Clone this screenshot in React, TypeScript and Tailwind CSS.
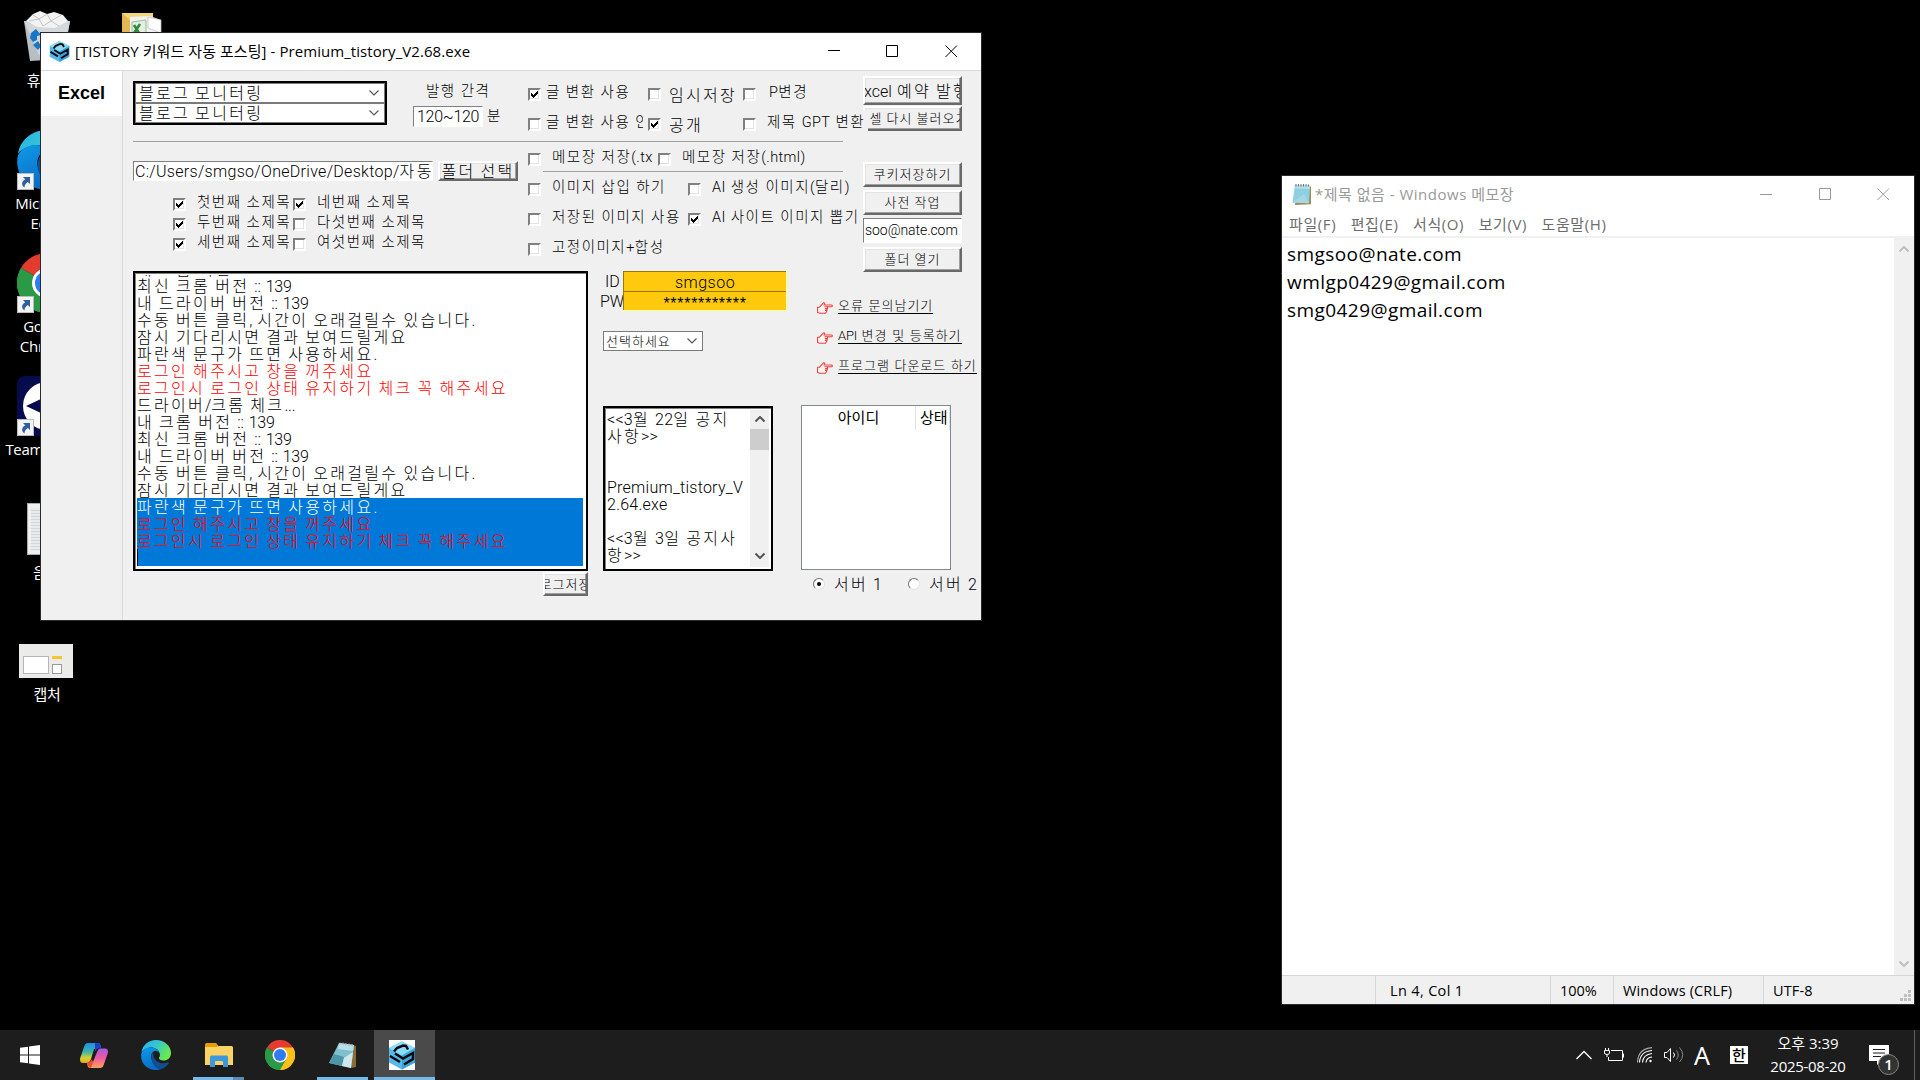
import React from "react";

const GULIM = "font-light font-['Liberation_Sans','Noto_Sans_CJK_KR',sans-serif]";
const MALGUN = "font-['Open_Sans','Noto_Sans_CJK_KR',sans-serif]";

type TProps = { children: string; className?: string; latin?: string };

/* Korean runs keep the wide bitmap-font pitch, Latin runs get their own tracking. */
function T({ children, className = "", latin = "tracking-[-0.2px]" }: TProps) {
  const parts = children.split(/([A-Za-z0-9.:/_~,@()*<>+]+)/);
  return (
    <span className={`whitespace-pre ${className}`}>
      {parts.map((p, i) => (i % 2 ? <span key={i} className={`font-['Roboto','Liberation_Sans',sans-serif] ${latin}`}>{p}</span> : p))}
    </span>
  );
}

const K17 = "text-[16px] leading-[17px] tracking-[2.3px] [word-spacing:-1.7px]";
const K15 = "text-[14.5px] leading-[17px] tracking-[1.5px] [word-spacing:-0.5px]";
const K13 = "text-[13px] leading-[15px] tracking-[1px] [word-spacing:-0.5px]";

function Box({ on = false }: { on?: boolean }) {
  return (
    <span className="flex size-[13px] shrink-0 items-center justify-center border-2 border-t-[#808080] border-l-[#808080] border-r-white border-b-white bg-white shadow-[inset_-1px_-1px_0_#e3e3e3]">
      {on && (
        <svg width="9" height="9" viewBox="0 0 9 9" shapeRendering="crispEdges">
          <path d="M1 3h1v1h1v1h1v-1h1v-1h1v-1h1v-1h1v3h-1v1h-1v1h-1v1h-1v1h-1v-1h-1v-1h-1z" fill="#000" />
        </svg>
      )}
    </span>
  );
}

type CheckProps = { on?: boolean; label: string; className?: string; text?: string; textClass?: string };
function Check({ on, label, className = "", text = K15, textClass = "ml-[11px] -mt-[4px]" }: CheckProps) {
  return (
    <label className={`flex h-[13px] shrink-0 items-start ${className}`}>
      <Box on={on} />
      <T className={`${text} ${textClass}`} latin="tracking-[0.400px]">{label}</T>
    </label>
  );
}

function Button({ children, className = "" }: { children: React.ReactNode; className?: string }) {
  return (
    <button className={`flex shrink-0 items-center justify-center overflow-hidden border-2 border-t-white border-l-white border-r-[#696969] border-b-[#696969] bg-[#f0f0f0] shadow-[inset_-1px_-1px_0_#a0a0a0,inset_1px_1px_0_#e3e3e3] ${className}`}>
      {children}
    </button>
  );
}

function Chevron({ className = "", up = false, w = 10, color = "#555", sw = 1.2 }: { className?: string; up?: boolean; w?: number; color?: string; sw?: number }) {
  return (
    <svg className={className} width={w} height={w * 0.6} viewBox="0 0 10 6" fill="none" stroke={color} strokeWidth={sw}>
      <path d={up ? "M0.5 5.5L5 1L9.5 5.5" : "M0.5 0.5L5 5L9.5 0.5"} />
    </svg>
  );
}

function CubeIcon({ size }: { size: number }) {
  return (
    <svg width={size} height={size} viewBox="0 0 26 28">
      <path d="M13 0L26 6.5V21L13 28L0 21V6.5Z" fill="#55b9ea" />
      <path d="M13 0L26 6.5L13 14L0 6.5Z" fill="#8adcf8" />
      <path d="M13 14L26 6.5V21L13 28Z" fill="#3aa4dd" />
      <path d="M5 10L8 6.5L14 4L17 4.5L19 8M1 14.500L11 20.500M6 12L14 17L24 11.500V17.500L15 23" fill="none" stroke="#0a0a0a" strokeWidth="2.500" />
    </svg>
  );
}

function EdgeIcon({ size }: { size: number }) {
  return (
    <svg width={size} height={size} viewBox="0 0 30 30">
      <defs>
        <linearGradient id="eg1" x1="0" y1="0" x2="1" y2="0.5">
          <stop offset="0" stopColor="#2bb0f0" />
          <stop offset="0.5" stopColor="#33c6d0" />
          <stop offset="1" stopColor="#6be84e" />
        </linearGradient>
        <linearGradient id="eg2" x1="0" y1="0" x2="0.4" y2="1">
          <stop offset="0" stopColor="#0f9be8" />
          <stop offset="1" stopColor="#0a6cc8" />
        </linearGradient>
      </defs>
      <path d="M0.5 12C1.5 5 7.5 0 15 0C23.500 0 30 6 30 13C30 18 26.500 20.500 22.500 20.500C19 20.500 17.500 19 18 17.500C19 16.500 19.200 15 18.600 13C17.500 9 12 6.500 7 8C4 9 1.500 10 0.500 12Z" fill="url(#eg1)" />
      <path d="M0.200 14C1 9.500 5.500 7.500 9.500 7.500C15 7.500 18.800 11 18.800 15C18.800 13 17 11 14.500 11C11 11 9.500 15 10.500 19C12 25 17 28.500 19 29.400C10 32 -1 26 0.200 14Z" fill="url(#eg2)" />
      <path d="M12.500 12C8 16 11 27 19 29.400C23 28.500 26 26 27.800 23C28 22.500 27.500 22 27 22.300C20 25.500 11 21 12.500 12Z" fill="#124d94" />
    </svg>
  );
}

function ChromeIcon({ size }: { size: number }) {
  return (
    <svg width={size} height={size} viewBox="0 0 48 48">
      <path d="M24 24L3.200 12A24 24 0 0 1 44.800 12Z" fill="#e33b2e" />
      <path d="M24 24L44.800 12A24 24 0 0 1 24 48Z" fill="#fbc116" />
      <path d="M24 24L24 48A24 24 0 0 1 3.200 12Z" fill="#2b9a47" />
      <path d="M24 12H44.800A24 24 0 0 1 24 48L34.400 30Z" fill="#fbc116" />
      <path d="M34.400 30L24 48A24 24 0 0 1 3.200 12L13.600 30Z" fill="#2b9a47" />
      <circle cx="24" cy="24" r="12" fill="#fff" />
      <circle cx="24" cy="24" r="9.600" fill="#2f7bf0" />
    </svg>
  );
}

function Shortcut() {
  return (
    <svg className="absolute bottom-0 left-0" width="17" height="17" viewBox="0 0 17 17">
      <rect x="0.500" y="0.500" width="16" height="16" fill="#f4f4f4" stroke="#bbb" />
      <path d="M6 4H13V11L10.800 9C8.500 10.500 7.500 12 7.500 14.500C4 12 4.500 8.500 8.200 6.300Z" fill="#2d5f9f" />
    </svg>
  );
}

function NotepadIcon({ w, h }: { w: number; h: number }) {
  return (
    <svg width={w} height={h} viewBox="0 0 20 25" preserveAspectRatio="none">
      <path d="M4 2L19 3V24L3 25Z" fill="#a08a58" />
      <path d="M3 1L18 2L17 23L0.500 22Z" fill="#8fd0e0" />
      <path d="M3 1L18 2L17.800 6L2.500 5Z" fill="#b5e0ea" />
      <path d="M0.500 22L12 12L17 23Z" fill="#a5d8e4" />
      <path d="M4 0V3M6.500 0V3M9 0V3M11.500 0V3M14 0V3M16.500 0.500V3" stroke="#666" strokeWidth="1" />
    </svg>
  );
}

function DeskLabel({ children, className = "" }: { children: string; className?: string }) {
  return <span className={`${MALGUN} whitespace-pre text-center text-[15px] leading-[20px] tracking-[-0.3px] text-white ${className}`}>{children}</span>;
}

function Desktop() {
  return (
    <>
      <div className="absolute top-[9px] left-0 flex w-[94px] flex-col items-center">
        <svg width="48" height="52" viewBox="0 0 48 52">
          <path d="M1 12L47 12L40 50L7 52Z" fill="#b9bec3" />
          <path d="M1 12L15 18L47 12L40 50L16 46Z" fill="#d4d8da" />
          <path d="M3 12L10 5L17 2L24 5L31 3L40 6L45 12L32 19L14 18Z" fill="#f3f3f3" />
          <path d="M10 6L16 10L24 5L28 12L38 6M6 12L16 10L20 17L28 12L36 17" stroke="#c5c5c5" fill="none" />
          <path d="M8 24L13 20L18 26L14 27V31L10 33L7 29ZM10 36L15 32L18 37L15 41Z" fill="#1877c9" />
        </svg>
        <DeskLabel className="mt-[9px]">휴지통</DeskLabel>
      </div>
      <div className="absolute top-[13px] left-[122px]">
        <svg width="40" height="40" viewBox="0 0 40 40">
          <path d="M0 0H31V40H0Z" fill="#f6d67a" />
          <path d="M0 0L10 9V40H0Z" fill="#e0b650" />
          <path d="M8 4L28 3L39 7V40H8Z" fill="#f2f2f2" />
          <path d="M26 4L39 7V20L26 15Z" fill="#fff" stroke="#bbb" strokeWidth="0.700" />
          <path d="M10 9L24 7V30L10 28Z" fill="#e3efe0" stroke="#9db99a" />
          <path d="M12 12L17 20M18 11L12 20" stroke="#2d8a3e" strokeWidth="2.500" />
        </svg>
      </div>
      <div className="absolute top-[130px] left-0 flex w-[94px] flex-col items-center">
        <div className="relative h-[60px] w-[60px]"><EdgeIcon size={60} /><Shortcut /></div>
        <DeskLabel className="mt-[3px]">{"Microsoft\nEdge"}</DeskLabel>
      </div>
      <div className="absolute top-[253px] left-0 flex w-[94px] flex-col items-center">
        <div className="relative h-[60px] w-[60px]"><ChromeIcon size={60} /><Shortcut /></div>
        <DeskLabel className="mt-[3px]">{"Google\nChrome"}</DeskLabel>
      </div>
      <div className="absolute top-[376px] left-0 flex w-[94px] flex-col items-center">
        <div className="relative h-[60px] w-[60px]">
          <svg width="60" height="60" viewBox="0 0 60 60">
            <rect width="60" height="60" rx="8" fill="#060b4e" />
            <circle cx="30" cy="30" r="24" fill="#fff" />
            <path d="M9 30L26 22V27H34V22L51 30L34 38V33H26V38Z" fill="#060b4e" />
          </svg>
          <Shortcut />
        </div>
        <DeskLabel className="mt-[3px]">TeamViewer</DeskLabel>
      </div>
      <div className="absolute top-[503px] left-[27px] h-[52px] w-[40px] border border-[#aaa] bg-[#eef0f1] pt-[4px] pl-[3px]">
        <div className="h-[43px] bg-[repeating-linear-gradient(#e8ebec_0_2px,#d3d6d8_2px_3px)]" />
      </div>
      <DeskLabel className="absolute top-[562px] left-[33px]">음성</DeskLabel>
      <div className="absolute top-[644px] left-0 flex w-[92px] flex-col items-center">
        <div className="flex h-[34px] w-[54px] gap-[3px] bg-[#ebebe9] px-[4px] pt-[12px]">
          <div className="h-[18px] w-[26px] border border-[#b5b5b5] bg-white" />
          <div className="flex flex-col">
            <div className="h-[3px] w-[10px] bg-[#f7c52c]" />
            <div className="mt-[5px] h-[10px] w-[10px] border border-[#999] bg-white" />
          </div>
        </div>
        <DeskLabel className="mt-[6px] pl-[2px]">캡처</DeskLabel>
      </div>
    </>
  );
}

const LOG: [string, string, boolean][] = [
  ["내 크롬 버전 :: 139", "k", false],
  ["최신 크롬 버전 :: 139", "k", false],
  ["내 드라이버 버전 :: 139", "k", false],
  ["수동 버튼 클릭, 시간이 오래걸릴수 있습니다.", "k", false],
  ["잠시 기다리시면 결과 보여드릴게요", "k", false],
  ["파란색 문구가 뜨면 사용하세요.", "k", false],
  ["로그인 해주시고 창을 꺼주세요", "r", false],
  ["로그인시 로그인 상태 유지하기 체크 꼭 해주세요", "r", false],
  ["드라이버/크롬 체크...", "k", false],
  ["내 크롬 버전 :: 139", "k", false],
  ["최신 크롬 버전 :: 139", "k", false],
  ["내 드라이버 버전 :: 139", "k", false],
  ["수동 버튼 클릭, 시간이 오래걸릴수 있습니다.", "k", false],
  ["잠시 기다리시면 결과 보여드릴게요", "k", false],
  ["파란색 문구가 뜨면 사용하세요.", "w", true],
  ["로그인 해주시고 창을 꺼주세요", "r", true],
  ["로그인시 로그인 상태 유지하기 체크 꼭 해주세요", "r", true],
  ["", "k", true],
];
const LOG_COLOR: Record<string, string> = { k: "text-black", r: "text-[#ff0000]", w: "text-white" };

function Combo() {
  return (
    <div className="flex h-[20px] items-center justify-between border border-[#7a7a7a] bg-white pr-[5px] pl-[3px]">
      <T className={K17}>블로그 모니터링</T>
      <Chevron />
    </div>
  );
}

function Hand() {
  return (
    <svg width="16" height="12" viewBox="0 0 16 12" fill="#fff6f5" stroke="#f0403c" strokeWidth="1.100" strokeLinejoin="round">
      <path d="M0.600 5.200H2.500L6.500 0.800C7.500 0.400 8 1.300 7.500 2.200L7 3H14.500C15.600 3 15.600 4.800 14.500 4.800H10.500V6.300L10 8L9.500 9.800L8.500 11.300H3L0.600 10.500Z" />
      <path d="M7.500 4.800H10.500M8 6.600H10.300M8 8.400H10" />
    </svg>
  );
}

const LINKS = ["오류 문의남기기", "API 변경 및 등록하기", "프로그램 다운로드 하기"];

function TopOptions() {
  return (
    <div className="flex w-[740px] shrink-0 flex-col">
      <div className="flex h-[70px]">
        <div className="mt-[10px] ml-[10px] h-[44px] w-[254px] shrink-0 border-2 border-black bg-white">
          <Combo />
          <Combo />
        </div>
        <div className="ml-[26px] w-[115px] shrink-0 pt-[12px]">
          <T className={`ml-[13px] block ${K15}`}>발행 간격</T>
          <div className="mt-[6px] flex items-center">
            <div className="flex h-[21px] w-[70px] items-center border border-white border-t-[#808080] border-l-[#808080] bg-white pl-[3px]">
              <T className="text-[16px] leading-[18px]" latin="tracking-[-0.3px]">120~120</T>
            </div>
            <T className={`ml-[4px] ${K15}`}>분</T>
          </div>
        </div>
        <div className="flex w-[115px] shrink-0 flex-col gap-[17px] overflow-hidden pt-[17px]">
          <Check on label="글 변환 사용" textClass="ml-[5px] -mt-[4px]" />
          <Check label="글 변환 사용 안함" textClass="ml-[5px] -mt-[4px]" />
        </div>
        <div className="ml-[5px] flex w-[95px] shrink-0 flex-col gap-[17px] pt-[17px]">
          <Check label="임시저장" text={K17} textClass="ml-[8px] -mt-[1px]" />
          <Check on label="공개" text={K17} textClass="ml-[8px] -mt-[1px]" />
        </div>
        <div className="z-10 flex flex-col gap-[17px] pt-[17px]">
          <Check label="P변경" textClass="ml-[13px] -mt-[4px]" />
          <Check label="제목 GPT 변환" textClass="ml-[8px] -mt-[8px] h-[24px] w-[104px] bg-[#f0f0f0] pt-[4px] pl-[3px]" />
        </div>
      </div>
      <div className="ml-[10px] h-px w-[710px] bg-[#a0a0a0]" />
      <div className="flex">
        <div className="ml-[10px] w-[395px] pt-[19px]">
          <div className="flex gap-[5px]">
            <div className="flex h-[20px] w-[300px] items-center overflow-hidden border border-white border-t-[#808080] border-l-[#808080] bg-white pl-px">
              <T className={K17} latin="tracking-[0.3px]">C:/Users/smgso/OneDrive/Desktop/자동</T>
            </div>
            <Button className="h-[20px] w-[80px]"><T className={`mt-px ${K17}`}>폴더 선택</T></Button>
          </div>
          <div className="mt-[17px] ml-[40px] grid grid-cols-[120px_auto] gap-y-[7px]">
            <Check on label="첫번째 소제목" />
            <Check on label="네번째 소제목" />
            <Check on label="두번째 소제목" />
            <Check label="다섯번째 소제목" />
            <Check on label="세번째 소제목" />
            <Check label="여섯번째 소제목" />
          </div>
        </div>
        <div className="flex w-[335px] flex-col pt-[5px]">
          <div className="flex h-[24px]">
            <div className="flex w-[125px] items-start overflow-hidden pt-[6px]"><Check label="메모장 저장(.txt)" /></div>
            <Check label="메모장 저장(.html)" className="mt-[6px] ml-[5px]" />
          </div>
          <div className="ml-[15px] h-px w-[300px] bg-[#a0a0a0]" />
          <div className="mt-[11px] flex">
            <Check label="이미지 삽입 하기" className="w-[160px]" />
            <Check label="AI 생성 이미지(달리)" />
          </div>
          <div className="mt-[17px] flex">
            <Check label="저장된 이미지 사용" className="w-[160px]" />
            <Check on label="AI 사이트 이미지 뽑기" />
          </div>
          <Check label="고정이미지+합성" className="mt-[17px]" />
        </div>
      </div>
    </div>
  );
}

function Radio({ on = false, label }: { on?: boolean; label: string }) {
  return (
    <label className="flex w-[66px] shrink-0 items-center gap-[9px]">
      <span className="flex size-[12px] shrink-0 items-center justify-center rounded-full border border-[#e3e3e3] border-t-[#707070] border-l-[#707070] bg-white">
        {on && <span className="size-[4px] rounded-full bg-black" />}
      </span>
      <T className={`mt-px ${K17}`} latin="tracking-[0px]">{label}</T>
    </label>
  );
}

function MainWindow() {
  return (
    <div className="absolute top-[32px] left-[40px] flex h-[589px] w-[942px] flex-col border border-[#2a2a2a] bg-[#f0f0f0] text-black">
      <div className="flex h-[38px] shrink-0 items-center border-b border-[#d9d9d9] bg-white pl-[8px]">
        <CubeIcon size={21} />
        <span className={`ml-[5px] whitespace-pre text-[15px] tracking-[0.070px] ${MALGUN}`}>[TISTORY 키워드 자동 포스팅] - Premium_tistory_V2.68.exe</span>
        <svg className="mr-[2px] ml-auto" width="157" height="13" viewBox="0 0 157 13" fill="none" stroke="#000">
          <path d="M6 5.500H18M64.500 0.500H75.500V11.500H64.500ZM123.500 0.500L135 12M135 0.500L123.500 12" />
        </svg>
      </div>
      <div className={`flex min-h-0 flex-1 ${GULIM}`}>
        <div className="w-[82px] shrink-0 border-r border-[#d9d9d9]">
          <div className="flex h-[45px] items-center justify-center bg-white text-[18px] font-bold">Excel</div>
        </div>
        <div className="w-[858px]">
          <div className="flex h-[200px]">
            <TopOptions />
            <div className="flex w-[99px] flex-col pt-[5px]">
              <Button className="h-[29px]"><T className={`mt-px ${K17}`} latin="tracking-[0px]">Excel 예약 발행</T></Button>
              <Button className="mt-px h-[25px]"><T className={K13}>엑셀 다시 불러오기</T></Button>
              <Button className="mt-[31px] h-[25px]"><T className={K13}>쿠키저장하기</T></Button>
              <Button className="mt-[3px] h-[25px]"><T className={K13}>사전 작업</T></Button>
              <div className="mt-[3px] flex h-[25px] shrink-0 items-center border border-white border-t-[#808080] border-l-[#808080] bg-white pl-px">
                <T className="text-[14px]" latin="tracking-[-0.050px]">soo@nate.com</T>
              </div>
              <Button className="mt-[4px] h-[25px] shrink-0"><T className={K13}>폴더 열기</T></Button>
            </div>
          </div>
          <div className="flex pl-[10px]">
            <div className="flex w-[455px] flex-col items-end">
              <div className="h-[300px] w-[455px] overflow-hidden border-2 border-black bg-white p-[2px] shadow-[inset_1px_1px_0_#808080]">
                <div className="h-[292px] w-[446px] overflow-hidden">
                  <div className="-mt-[15px]">
                    {LOG.map(([text, color, sel], i) => (
                      <div key={i} className={`h-[17px] ${sel ? "bg-[#0078d7]" : ""} ${LOG_COLOR[color]} ${i === 17 ? "border-l border-black" : ""}`}>
                        <T className={`block pt-px ${K17}`}>{text}</T>
                      </div>
                    ))}
                  </div>
                </div>
              </div>
              <Button className="mt-px h-[24px] w-[45px]"><T className={K13}>로그저장</T></Button>
            </div>
            <div className="ml-[15px] w-[198px] shrink-0">
              <div className="flex h-[40px]">
                <div className="-ml-[3px] w-[23px] overflow-hidden pt-px font-['Roboto',sans-serif] text-[16px] leading-[20px] whitespace-pre">
                  <div className="pl-[5px]">ID</div>
                  <div>PW</div>
                </div>
                <div className="w-[164px] shrink-0 border-r border-b border-[#ffff9a] bg-[#ffc90e] text-center font-['Roboto',sans-serif]">
                  <div className="h-[20px] border-t border-l border-[#98780a] text-[16px] leading-[21px] tracking-[0.500px]">smgsoo</div>
                  <div className="h-[19px] border-t border-l border-[#98780a] font-['Liberation_Sans',sans-serif] text-[16px] leading-[24px] tracking-[0.700px]">************</div>
                </div>
              </div>
              <div className="mt-[20px] flex h-[20px] w-[100px] items-center justify-between border border-[#7a7a7a] bg-white pr-[5px] pl-[2px]">
                <T className={K13}>선택하세요</T>
                <Chevron />
              </div>
              <div className="mt-[55px] flex h-[165px] w-[170px] border-2 border-black bg-white shadow-[inset_1px_1px_0_#808080]">
                <div className="flex w-[145px] flex-col overflow-hidden pt-[3px] pl-[2px]">
                  {["<<3월 22일 공지", "사항>>", "", "", "Premium_tistory_V", "2.64.exe", "", "<<3월 3일 공지사", "항>>"].map((l, i) => (
                    <T key={i} className={`block h-[17px] shrink-0 ${K17}`} latin="tracking-[0.250px]">{l}</T>
                  ))}
                </div>
                <div className="my-[2px] flex w-[19px] flex-col items-center bg-[#f0f0f0]">
                  <Chevron up className="mt-[6px]" sw={2} />
                  <div className="mt-[7px] h-[21px] w-[19px] bg-[#cdcdcd]" />
                  <Chevron className="mt-auto mb-[8px]" sw={2} />
                </div>
              </div>
            </div>
            <div className="w-[178px] shrink-0 pt-[26px]">
              <div className="ml-[16px] flex flex-col gap-[13px]">
                {LINKS.map((l) => (
                  <a key={l} className="flex h-[17px] items-center gap-[5px]">
                    <span className="mt-[5px]"><Hand /></span>
                    <T className="border-b border-black text-[13px] leading-[15px] tracking-[1px]">{l}</T>
                  </a>
                ))}
              </div>
              <div className="mt-[31px] h-[165px] w-[150px] border border-[#828790] bg-white">
                <div className={`flex h-[24px] text-[15px] leading-[23px] font-normal ${MALGUN}`}>
                  <div className="w-[114px] border-r border-[#e5e5e5] text-center">아이디</div>
                  <div className="w-[34px] overflow-hidden border-r border-[#e5e5e5] pl-[4px] whitespace-pre">상태</div>
                </div>
              </div>
              <div className="mt-[5px] ml-[12px] flex gap-[29px]">
                <Radio on label="서버 1" />
                <Radio label="서버 2" />
              </div>
            </div>
          </div>
        </div>
      </div>
    </div>
  );
}

function Notepad() {
  return (
    <div className={`absolute top-[175px] left-[1281px] flex h-[830px] w-[634px] flex-col border border-[#2a2a2a] bg-white ${MALGUN}`}>
      <div className="flex h-[37px] shrink-0 items-center pl-[10px] text-[#999]">
        <NotepadIcon w={20} h={21} />
        <span className="ml-[3px] whitespace-pre text-[15px] tracking-[0.500px]">*제목 없음 - Windows 메모장</span>
        <svg className="mr-px ml-auto" width="154" height="13" viewBox="0 0 154 13" fill="none" stroke="#999">
          <path d="M1 6.500H13M60.500 0.500H71.500V11.500H60.500ZM118.500 0.500L130 12M130 0.500L118.500 12" />
        </svg>
      </div>
      <div className="flex h-[25px] shrink-0 items-center gap-[14.500px] border-b-2 border-[#f0f0f0] pl-[7px] text-[15px] tracking-[0.600px] whitespace-pre text-[#6d6d6d]">
        <span>파일(F)</span><span>편집(E)</span><span>서식(O)</span><span>보기(V)</span><span>도움말(H)</span>
      </div>
      <div className="flex min-h-0 flex-1">
        <div className="flex-1 pt-[2px] pl-[5px] text-[19px] leading-[28px] tracking-[0.430px] text-black">
          <div>smgsoo@nate.com</div>
          <div>wmlgp0429@gmail.com</div>
          <div>smg0429@gmail.com</div>
        </div>
        <div className="flex w-[20px] flex-col items-center justify-between bg-[#f0f0f0] py-[8px]">
          <Chevron up color="#bfbfbf" sw={2} />
          <Chevron color="#bfbfbf" sw={2} />
        </div>
      </div>
      <div className="flex h-[29px] shrink-0 border-t border-[#d7d7d7] bg-[#f0f0f0] text-[14.500px] leading-[29px] whitespace-pre text-black">
        <div className="w-[94px] border-r border-[#d7d7d7]" />
        <div className="w-[175px] border-r border-[#d7d7d7] pl-[14px] tracking-[0.350px]">Ln 4, Col 1</div>
        <div className="w-[63px] border-r border-[#d7d7d7] pl-[9px]">100%</div>
        <div className="w-[150px] border-r border-[#d7d7d7] pl-[9px] tracking-[0.150px]">Windows (CRLF)</div>
        <div className="pl-[9px] tracking-[0.150px]">UTF-8</div>
        <svg className="mt-auto mr-[2px] mb-[2px] ml-auto" width="12" height="12" viewBox="0 0 12 12" fill="#bfbfbf">
          <path d="M8 0h3v3h-3zM8 4h3v3h-3zM8 8h3v3h-3zM4 4h3v3h-3zM4 8h3v3h-3zM0 8h3v3h-3z" />
        </svg>
      </div>
    </div>
  );
}

function Taskbar() {
  return (
    <div className={`absolute inset-x-0 bottom-0 flex h-[50px] items-center bg-[#1d1d1d] text-white ${MALGUN}`}>
      <svg className="ml-[20px]" width="20" height="20" viewBox="0 0 20 20" fill="#fff">
        <path d="M0 2.800L8 1.700V9.500H0ZM9 1.500L20 0V9.500H9ZM0 10.500H8V18.300L0 17.200ZM9 10.500H20V20L9 18.500Z" />
      </svg>
      <svg className="ml-[40px]" width="28" height="25" viewBox="0 0 28 25">
        <defs>
          <linearGradient id="cp1" x1="0" y1="0" x2="0" y2="1"><stop offset="0" stopColor="#1b8fe8" /><stop offset="0.450" stopColor="#3fb6a8" /><stop offset="0.750" stopColor="#d8d52f" /><stop offset="1" stopColor="#f0a030" /></linearGradient>
          <linearGradient id="cp2" x1="0" y1="0" x2="0" y2="1"><stop offset="0" stopColor="#a45ae8" /><stop offset="0.500" stopColor="#ef5a9c" /><stop offset="1" stopColor="#fba35c" /></linearGradient>
        </defs>
        <path d="M8 0H18C20 0 20.500 2 21 4L14 6L11 16C10 19 8 20 6 20H3C0 20 -0.500 17 0.500 14L4 4C5 1 6 0 8 0Z" fill="url(#cp1)" />
        <path d="M15 0H18C20 0 20.500 2 21.500 5.500H19C16.500 5.500 15.500 7 15 9Z" fill="#1f3fc8" />
        <path d="M20 25H10C8 25 7.500 23 7 20L13 19L17 9C18 6.500 19 5.500 21 5.500H25C28 5.500 28.500 8 27.500 11L24 21C23 24 22 25 20 25Z" fill="url(#cp2)" />
        <path d="M11 25C9 25 8 23 7 19.800C9 20 11 18.500 12 16L13 19Z" fill="#e8502c" />
      </svg>
      <div className="ml-[33px]"><EdgeIcon size={30} /></div>
      <div className="relative ml-[22px] flex h-[50px] w-[51px] items-center justify-center">
        <svg width="28" height="24" viewBox="0 0 28 24">
          <path d="M0 1.500Q0 0 1.500 0H11L13.500 3V8H0Z" fill="#e29e09" />
          <path d="M0 4H11L14 3H26.500Q28 3 28 4.500V22H0Z" fill="#fbd264" />
          <path d="M5 24V14Q5 12.500 6.500 12.500H21.500Q23 12.500 23 14V24H18V19Q18 18 17 18H11Q10 18 10 19V24Z" fill="#3c97dd" />
        </svg>
        <div className="absolute inset-x-0 bottom-0 flex h-[3px]"><div className="w-[40px] bg-[#76b9ed]" /><div className="w-[11px] bg-[#5a8cb5]" /></div>
      </div>
      <div className="ml-[21px]"><ChromeIcon size={30} /></div>
      <div className="relative ml-[22px] flex h-[50px] w-[51px] items-center justify-center">
        <svg width="28" height="27" viewBox="0 0 28 27">
          <path d="M24 3L27 4V25L22 26Z" fill="#8a6c38" />
          <path d="M10 1L25 3L22 26L0 21Z" fill="#7fc0cf" />
          <path d="M10 1L25 3L24 9L9 7Z" fill="#b7dfe8" />
          <path d="M0 21L5 12L15 15L13 24Z" fill="#4c96a8" />
          <path d="M13 24L15 16L24 10L22 26Z" fill="#cfe8ed" />
          <path d="M11 0.500V2.500M14 0.500V3M17 1V3.500M20 1.500V4M23 2V4" stroke="#aaa" />
        </svg>
        <div className="absolute inset-x-0 bottom-0 h-[3px] bg-[#76b9ed]" />
      </div>
      <div className="ml-[6px] flex h-[50px] w-[61px] items-center justify-center border-b-[3px] border-[#76b9ed] bg-[#4a4a4a] pt-[3px] pr-[5px]">
        <div className="flex h-[30px] w-[26px] items-center justify-center bg-white"><CubeIcon size={29} /></div>
      </div>
      <div className="ml-auto flex h-[50px] items-center">
        <svg width="16" height="10" viewBox="0 0 16 10" fill="none" stroke="#fff" strokeWidth="1.300"><path d="M0.500 9L8 1.500L15.500 9" /></svg>
        <svg className="ml-[12px]" width="20" height="14" viewBox="0 0 20 14" fill="none" stroke="#fff"><path d="M7 2.500H18.500V12.500H4.500V9M19.500 5.500V9.500M1.500 0V2.500M4.500 0V2.500M0.500 2.500H5.500V5Q5.500 6.500 3 6.500Q0.500 6.500 0.500 5ZM3 6.500V9" /></svg>
        <svg className="ml-[13px]" width="16" height="16" viewBox="0 0 16 16" fill="none" stroke="#fff" strokeWidth="1.100"><circle cx="13.500" cy="14" r="1.200" fill="#fff" stroke="none" /><path d="M9 15.500Q9.500 10.500 15 10M5.500 15.500Q6 7.500 15 6.500M2.500 15.500Q3 4.500 15 3.500" /><path d="M0.500 15.500Q1 1.500 15 0.600" stroke="#aaa" /></svg>
        <svg className="ml-[11px]" width="20" height="16" viewBox="0 0 20 16" fill="none" stroke="#fff"><path d="M0.500 5.500H3L6.500 1.500V14.500L3 10.500H0.500ZM9.500 5.500Q11.500 8 9.500 10.500" /><path d="M12.500 3.500Q16 8 12.500 12.500M15.500 0.500Q22 8 15.500 15" stroke="#888" /></svg>
        <span className="ml-[9px] w-[18px] text-center font-['Noto_Sans',sans-serif] text-[25px] leading-[30px]">A</span>
        <span className="ml-[19px] flex size-[18px] items-center justify-center bg-white text-[15px] font-medium text-black">한</span>
        <div className="ml-[10px] flex w-[100px] flex-col items-center text-[15px] leading-[23px] whitespace-pre">
          <span>오후 3:39</span>
          <span className="tracking-[-0.300px]">2025-08-20</span>
        </div>
        <div className="relative ml-[11px] h-[20px] w-[20px]">
          <svg width="20" height="20" viewBox="0 0 20 20"><path d="M0 0H20V16H12L8 20V16H0Z" fill="#fff" /><path d="M4 4.500H16M4 8H16M4 11.500H12" stroke="#1d1d1d" /></svg>
          <span className="absolute top-[9px] left-[9px] flex size-[21px] items-center justify-center rounded-full border border-[#888] bg-[#333] text-[15px] font-semibold">1</span>
        </div>
        <div className="ml-[25px] h-[50px] w-[6px] border-l border-[#5f5f5f]" />
      </div>
    </div>
  );
}

export default function App() {
  return (
    <div className="relative h-[1080px] w-[1920px] overflow-hidden bg-black">
      <Desktop />
      <MainWindow />
      <Notepad />
      <Taskbar />
    </div>
  );
}
